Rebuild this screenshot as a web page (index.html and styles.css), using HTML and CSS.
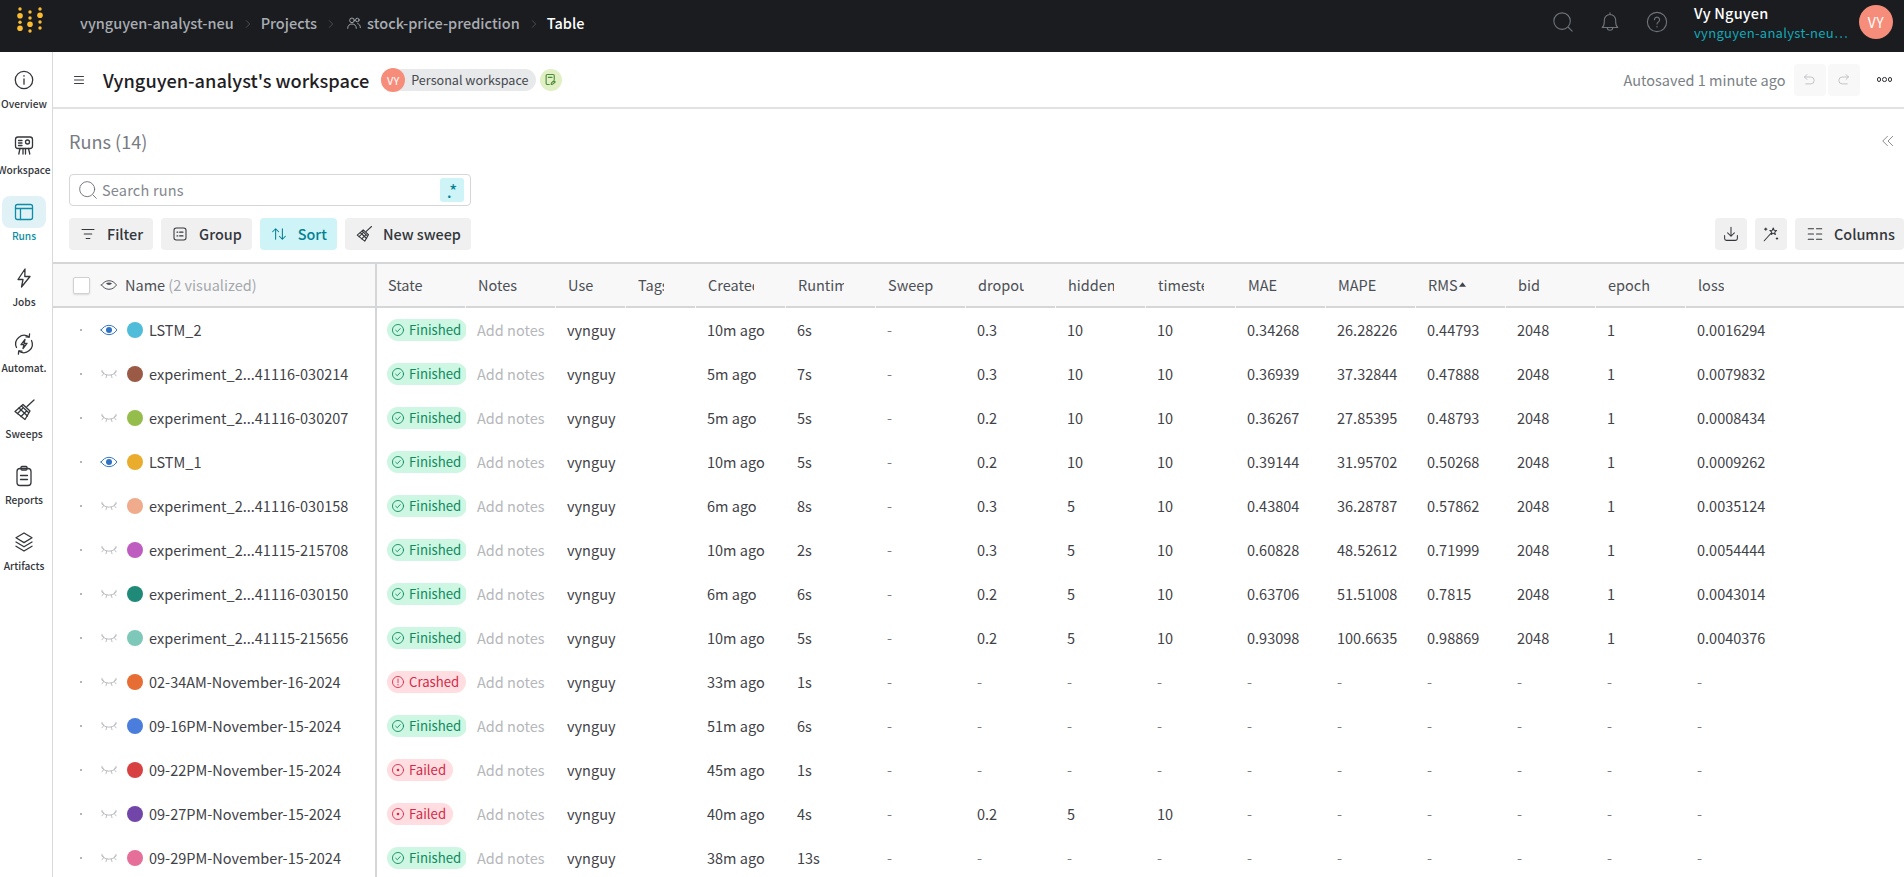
FILE: index.html
```html
<!DOCTYPE html>
<html lang="en">
<head>
<meta charset="utf-8">
<title>Table - stock-price-prediction</title>
<link rel="stylesheet" href="styles.css">
</head>
<body>
<svg class="defs" aria-hidden="true">
  <symbol id="i-info" viewBox="0 0 24 24"><circle cx="12" cy="12" r="8.7"/><path d="M12 11v5.2M12 7.600v.6"/></symbol>
  <symbol id="i-workspace" viewBox="0 0 24 24"><rect x="3.500" y="3" width="17" height="11.500" rx="2.500"/><path d="M6.500 6.500h3.500M6.500 9h3.500M6.500 11.500h3.500"/><circle cx="15.500" cy="8" r="2"/><path d="M8 14.500L6.800 20M11 14.500V20M13.500 14.500V20M16.500 14.500L17.800 20"/></symbol>
  <symbol id="i-runs" viewBox="0 0 24 24"><rect x="3.500" y="4.500" width="17" height="15" rx="2"/><path d="M3.500 8.500h17M8.500 8.500v11"/></symbol>
  <symbol id="i-jobs" viewBox="0 0 24 24"><path d="M13 3L6 13.500h5l-1.500 7.500L18 10.500h-5.200L13 3z"/></symbol>
  <symbol id="i-auto" viewBox="0 0 24 24"><path d="M4.500 15.500A8.500 8.500 0 0 1 17 4.900M19.500 8.500A8.500 8.500 0 0 1 7 19.100"/><path d="M17.600 1.900L17.200 5.200 14 4.900M6.400 22.100L6.800 18.800 10 19.100"/><path d="M13 7.500L9 12.700h3l-1 3.800 4-5.200h-3l1-3.800z"/></symbol>
  <symbol id="i-sweep" viewBox="0 0 24 24"><path d="M22 2l-7 6.500"/><path d="M11 6.500l7 6.500-5 8.500L3 13.500 11 6.500z"/><path d="M7 10l8.500 8M9.500 8l7 6.500M5.500 15.500l5-5M9 18.500l5-5"/></symbol>
  <symbol id="i-reports" viewBox="0 0 24 24"><rect x="5" y="4.500" width="14" height="17" rx="3"/><rect x="9" y="2.500" width="6" height="3.500" rx="1"/><path d="M8.500 11.500h7M8.500 15.500h7"/></symbol>
  <symbol id="i-layers" viewBox="0 0 24 24"><path d="M12 3l8 4.800-8 4.800-8-4.800L12 3z"/><path d="M4 12l8 4.800 8-4.800M4 16.200L12 21l8-4.800"/></symbol>
  <symbol id="i-search" viewBox="0 0 24 24"><circle cx="11" cy="11" r="9"/><path d="M18 18l4 4"/></symbol>
  <symbol id="i-bell" viewBox="0 0 24 24"><path d="M3.500 18c1.700-1.300 2.300-3.300 2.300-6.300V10a6.200 6.200 0 0 1 12.400 0v1.700c0 3 .6 5 2.300 6.300H3.500z"/><path d="M9 18a3 3 0 0 0 6 0"/><path d="M12 2v1.800"/></symbol>
  <symbol id="i-help" viewBox="0 0 24 24"><circle cx="12" cy="12" r="10.500"/><path d="M9.200 9.500a2.800 2.800 0 1 1 4.300 2.400c-1 .6-1.500 1.200-1.500 2.300M12 16.800v.6"/></symbol>
  <symbol id="i-users" viewBox="0 0 24 24"><circle cx="9" cy="8" r="3.500"/><path d="M2.500 20c0-4 2.500-6.500 6.500-6.500s6.500 2.500 6.500 6.500"/><circle cx="17" cy="7.500" r="2.700"/><path d="M17.500 13c2.500.3 4 2.500 4 6"/></symbol>
  <symbol id="i-chev" viewBox="0 0 24 24"><path d="M8 4l8 8-8 8"/></symbol>
  <symbol id="i-collapse" viewBox="0 0 24 24"><path d="M11 4l-8 8 8 8M20 4l-8 8 8 8"/></symbol>
  <symbol id="i-menu" viewBox="0 0 24 24"><path d="M3 5h18M3 12h18M3 19h18"/></symbol>
  <symbol id="i-note" viewBox="0 0 24 24"><path d="M10 20H7a2 2 0 0 1-2-2V6a2 2 0 0 1 2-2h9a2 2 0 0 1 2 2v6"/><path d="M8.500 8.500h6"/><path d="M13 20l.500-2.500 4-3.500 2 2-4 3.500-2.500.500z"/></symbol>
  <symbol id="i-undo" viewBox="0 0 24 24"><path d="M8 4L4 8l4 4"/><path d="M4 8h10a5.500 5.500 0 0 1 0 11H6"/></symbol>
  <symbol id="i-redo" viewBox="0 0 24 24"><path d="M16 4l4 4-4 4"/><path d="M20 8H10a5.500 5.500 0 0 0 0 11h8"/></symbol>
  <symbol id="i-filter" viewBox="0 0 24 24"><path d="M4 6h16M7 12h10M9.500 18h5"/></symbol>
  <symbol id="i-group" viewBox="0 0 24 24"><rect x="4" y="4" width="16" height="16" rx="3"/><path d="M8 9.500h1M11.500 9.500H16M8 14.500h1M11.500 14.500H16"/></symbol>
  <symbol id="i-sort" viewBox="0 0 24 24"><path d="M7.500 19V5M3.500 9l4-4 4 4M16.500 5v14M12.500 15l4 4 4-4"/></symbol>
  <symbol id="i-down" viewBox="0 0 24 24"><path d="M12 3v12M7.500 10.500L12 15l4.500-4.500"/><path d="M3.500 14v4a2.500 2.500 0 0 0 2.500 2.500h12a2.500 2.500 0 0 0 2.500-2.500v-4"/></symbol>
  <symbol id="i-wand" viewBox="0 0 24 24"><path d="M3 21l9-10"/><path d="M15 4l1.200 3 3.300.2-2.500 2.200.8 3.300-2.800-1.800-2.800 1.800.8-3.300-2.500-2.200 3.300-.2L15 4z"/><path d="M5 4v3M3.500 5.500h3M20 17v2M19 18h2"/></symbol>
  <symbol id="i-cols" viewBox="0 0 24 24"><path d="M3 5h7M14 5h7M3 12h7M14 12h7M3 19h7M14 19h7"/></symbol>
  <symbol id="i-eye" viewBox="0 0 24 24"><path d="M2 12c2.800-3.800 6-5.700 10-5.700s7.200 1.900 10 5.700c-2.800 3.800-6 5.700-10 5.700S4.800 15.800 2 12z"/><path class="fill" d="M8 9.500a4.500 4.500 0 0 0 8 0c-2.600-.9-5.400-.9-8 0z"/></symbol>
  <symbol id="i-eye-on" viewBox="0 0 24 24"><path d="M1.500 12C4.400 7.800 8 5.800 12 5.800s7.600 2 10.500 6.200c-2.900 4.200-6.500 6.200-10.500 6.200S4.400 16.200 1.500 12z"/><circle class="fill" cx="12" cy="12" r="4"/></symbol>
  <symbol id="i-eye-off" viewBox="0 0 24 24"><path d="M2 9c2.800 3 6 4.500 10 4.500S19.200 12 22 9"/><path d="M5 11.500L2.500 14.500M9 13.200L8 17M15 13.200l1 3.800M19 11.500l2.500 3M2.500 7l2 3.200M21.500 7l-2 3.200"/></symbol>
  <symbol id="i-ok" viewBox="0 0 24 24"><circle cx="12" cy="12" r="9.500"/><path d="M8 12.300l2.800 2.700 5-5.500"/></symbol>
  <symbol id="i-crash" viewBox="0 0 24 24"><circle cx="12" cy="12" r="9.500"/><path d="M12 6.800v6.400M12 16.200v1"/></symbol>
  <symbol id="i-fail" viewBox="0 0 24 24"><circle cx="12" cy="12" r="9.500"/><circle class="fill" cx="12" cy="12" r="2.300"/></symbol>
</svg>

<header class="topbar">
  <svg class="logo" viewBox="0 0 30 30" aria-label="Weights and Biases">
    <circle cx="2" cy="2" r="1.700"/><circle cx="2" cy="8.700" r="2.800"/><circle cx="2" cy="15.300" r="1.700"/><circle cx="2" cy="21.300" r="2.800"/>
    <circle cx="12" cy="5" r="1.700"/><circle cx="12" cy="11" r="1.700"/><circle cx="12" cy="17.300" r="2.800"/><circle cx="12" cy="24" r="1.700"/>
    <circle cx="22" cy="2" r="1.700"/><circle cx="22" cy="8.300" r="2.800"/><circle cx="22" cy="15" r="1.700"/><circle cx="22" cy="21" r="1.700"/>
  </svg>
  <nav class="crumbs">
    <span class="crumb">vynguyen-analyst-neu</span>
    <svg class="ic chev"><use href="#i-chev"/></svg>
    <span class="crumb">Projects</span>
    <svg class="ic chev"><use href="#i-chev"/></svg>
    <svg class="ic users"><use href="#i-users"/></svg>
    <span class="crumb">stock-price-prediction</span>
    <svg class="ic chev"><use href="#i-chev"/></svg>
    <span class="crumb current">Table</span>
  </nav>
  <div class="top-right">
    <svg class="ic top-ic"><use href="#i-search"/></svg>
    <svg class="ic top-ic"><use href="#i-bell"/></svg>
    <svg class="ic top-ic"><use href="#i-help"/></svg>
    <div class="user">
      <div class="user-name">Vy Nguyen</div>
      <div class="user-org">vynguyen-analyst-neu…</div>
    </div>
    <div class="avatar">VY</div>
  </div>
</header>

<div class="shell">
  <aside class="sidebar">
    <a class="nav"><span class="nav-ic"><svg class="ic"><use href="#i-info"/></svg></span><span class="nav-label">Overview</span></a>
    <a class="nav"><span class="nav-ic"><svg class="ic"><use href="#i-workspace"/></svg></span><span class="nav-label">Workspace</span></a>
    <a class="nav active"><span class="nav-ic"><svg class="ic"><use href="#i-runs"/></svg></span><span class="nav-label">Runs</span></a>
    <a class="nav"><span class="nav-ic"><svg class="ic"><use href="#i-jobs"/></svg></span><span class="nav-label">Jobs</span></a>
    <a class="nav"><span class="nav-ic"><svg class="ic"><use href="#i-auto"/></svg></span><span class="nav-label">Automat.</span></a>
    <a class="nav"><span class="nav-ic"><svg class="ic"><use href="#i-sweep"/></svg></span><span class="nav-label">Sweeps</span></a>
    <a class="nav"><span class="nav-ic"><svg class="ic"><use href="#i-reports"/></svg></span><span class="nav-label">Reports</span></a>
    <a class="nav"><span class="nav-ic"><svg class="ic"><use href="#i-layers"/></svg></span><span class="nav-label">Artifacts</span></a>
  </aside>

  <main class="main">
    <div class="pagehead">
      <svg class="ic menu"><use href="#i-menu"/></svg>
      <h1 class="title">Vynguyen-analyst's workspace</h1>
      <div class="owner"><span class="owner-av">VY</span><span class="owner-text">Personal workspace</span></div>
      <span class="chip"><svg class="ic"><use href="#i-note"/></svg></span>
      <div class="pagehead-right">
        <span class="saved">Autosaved 1 minute ago</span>
        <span class="hist first"><svg class="ic"><use href="#i-undo"/></svg></span>
        <span class="hist"><svg class="ic"><use href="#i-redo"/></svg></span>
        <span class="more"><i></i><i></i><i></i></span>
      </div>
    </div>

    <section class="panel">
      <div class="panel-title">
        <h2 class="runs-title">Runs (14)</h2>
        <svg class="ic collapse"><use href="#i-collapse"/></svg>
      </div>
      <div class="search">
        <svg class="ic search-ic"><use href="#i-search"/></svg>
        <span class="search-text">Search runs</span>
        <span class="regex">.*</span>
      </div>
      <div class="tools">
        <button class="btn"><svg class="ic"><use href="#i-filter"/></svg>Filter</button>
        <button class="btn"><svg class="ic"><use href="#i-group"/></svg>Group</button>
        <button class="btn on"><svg class="ic"><use href="#i-sort"/></svg>Sort</button>
        <button class="btn"><svg class="ic"><use href="#i-sweep"/></svg>New sweep</button>
        <span class="tools-gap"></span>
        <button class="btn square"><svg class="ic"><use href="#i-down"/></svg></button>
        <button class="btn square"><svg class="ic"><use href="#i-wand"/></svg></button>
        <button class="btn cols"><svg class="ic"><use href="#i-cols"/></svg>Columns</button>
      </div>
    </section>

    <div class="table">
      <div class="row head">
        <div class="hc hname"><span class="check"></span><svg class="ic eye-h"><use href="#i-eye"/></svg><span>Name <span class="muted">(2 visualized)</span></span></div>
        <div class="hc hstate"><span class="lbl">State</span></div>
        <div class="hc"><span class="lbl">Notes</span></div>
        <div class="hc"><span class="lbl">User</span></div>
        <div class="hc"><span class="lbl">Tags</span></div>
        <div class="hc"><span class="lbl">Created</span></div>
        <div class="hc"><span class="lbl">Runtime</span></div>
        <div class="hc"><span class="lbl">Sweep</span></div>
        <div class="hc"><span class="lbl">dropout</span></div>
        <div class="hc"><span class="lbl">hidden</span></div>
        <div class="hc"><span class="lbl">timestep</span></div>
        <div class="hc"><span class="lbl">MAE</span></div>
        <div class="hc"><span class="lbl">MAPE</span></div>
        <div class="hc"><span class="lbl">RMS</span><svg class="sortmark" viewBox="0 0 8 5"><path d="M4 0l4 5H0z"/></svg></div>
        <div class="hc"><span class="lbl">bid</span></div>
        <div class="hc"><span class="lbl">epoch</span></div>
        <div class="hc"><span class="lbl">loss</span></div>
      </div>

      <div class="row"><div class="c cname"><i class="tick"></i><svg class="ic eye on"><use href="#i-eye-on"/></svg><span class="dot d1"></span><span>LSTM_2</span></div><div class="c cstate"><span class="badge ok"><svg class="ic"><use href="#i-ok"/></svg>Finished</span></div><div class="c note">Add notes</div><div class="c">vynguy</div><div class="c"></div><div class="c">10m ago</div><div class="c">6s</div><div class="c dash">-</div><div class="c">0.3</div><div class="c">10</div><div class="c">10</div><div class="c">0.34268</div><div class="c">26.28226</div><div class="c">0.44793</div><div class="c">2048</div><div class="c">1</div><div class="c">0.0016294</div></div>
      <div class="row"><div class="c cname"><i class="tick"></i><svg class="ic eye off"><use href="#i-eye-off"/></svg><span class="dot d2"></span><span>experiment_2...41116-030214</span></div><div class="c cstate"><span class="badge ok"><svg class="ic"><use href="#i-ok"/></svg>Finished</span></div><div class="c note">Add notes</div><div class="c">vynguy</div><div class="c"></div><div class="c">5m ago</div><div class="c">7s</div><div class="c dash">-</div><div class="c">0.3</div><div class="c">10</div><div class="c">10</div><div class="c">0.36939</div><div class="c">37.32844</div><div class="c">0.47888</div><div class="c">2048</div><div class="c">1</div><div class="c">0.0079832</div></div>
      <div class="row"><div class="c cname"><i class="tick"></i><svg class="ic eye off"><use href="#i-eye-off"/></svg><span class="dot d3"></span><span>experiment_2...41116-030207</span></div><div class="c cstate"><span class="badge ok"><svg class="ic"><use href="#i-ok"/></svg>Finished</span></div><div class="c note">Add notes</div><div class="c">vynguy</div><div class="c"></div><div class="c">5m ago</div><div class="c">5s</div><div class="c dash">-</div><div class="c">0.2</div><div class="c">10</div><div class="c">10</div><div class="c">0.36267</div><div class="c">27.85395</div><div class="c">0.48793</div><div class="c">2048</div><div class="c">1</div><div class="c">0.0008434</div></div>
      <div class="row"><div class="c cname"><i class="tick"></i><svg class="ic eye on"><use href="#i-eye-on"/></svg><span class="dot d4"></span><span>LSTM_1</span></div><div class="c cstate"><span class="badge ok"><svg class="ic"><use href="#i-ok"/></svg>Finished</span></div><div class="c note">Add notes</div><div class="c">vynguy</div><div class="c"></div><div class="c">10m ago</div><div class="c">5s</div><div class="c dash">-</div><div class="c">0.2</div><div class="c">10</div><div class="c">10</div><div class="c">0.39144</div><div class="c">31.95702</div><div class="c">0.50268</div><div class="c">2048</div><div class="c">1</div><div class="c">0.0009262</div></div>
      <div class="row"><div class="c cname"><i class="tick"></i><svg class="ic eye off"><use href="#i-eye-off"/></svg><span class="dot d5"></span><span>experiment_2...41116-030158</span></div><div class="c cstate"><span class="badge ok"><svg class="ic"><use href="#i-ok"/></svg>Finished</span></div><div class="c note">Add notes</div><div class="c">vynguy</div><div class="c"></div><div class="c">6m ago</div><div class="c">8s</div><div class="c dash">-</div><div class="c">0.3</div><div class="c">5</div><div class="c">10</div><div class="c">0.43804</div><div class="c">36.28787</div><div class="c">0.57862</div><div class="c">2048</div><div class="c">1</div><div class="c">0.0035124</div></div>
      <div class="row"><div class="c cname"><i class="tick"></i><svg class="ic eye off"><use href="#i-eye-off"/></svg><span class="dot d6"></span><span>experiment_2...41115-215708</span></div><div class="c cstate"><span class="badge ok"><svg class="ic"><use href="#i-ok"/></svg>Finished</span></div><div class="c note">Add notes</div><div class="c">vynguy</div><div class="c"></div><div class="c">10m ago</div><div class="c">2s</div><div class="c dash">-</div><div class="c">0.3</div><div class="c">5</div><div class="c">10</div><div class="c">0.60828</div><div class="c">48.52612</div><div class="c">0.71999</div><div class="c">2048</div><div class="c">1</div><div class="c">0.0054444</div></div>
      <div class="row"><div class="c cname"><i class="tick"></i><svg class="ic eye off"><use href="#i-eye-off"/></svg><span class="dot d7"></span><span>experiment_2...41116-030150</span></div><div class="c cstate"><span class="badge ok"><svg class="ic"><use href="#i-ok"/></svg>Finished</span></div><div class="c note">Add notes</div><div class="c">vynguy</div><div class="c"></div><div class="c">6m ago</div><div class="c">6s</div><div class="c dash">-</div><div class="c">0.2</div><div class="c">5</div><div class="c">10</div><div class="c">0.63706</div><div class="c">51.51008</div><div class="c">0.7815</div><div class="c">2048</div><div class="c">1</div><div class="c">0.0043014</div></div>
      <div class="row"><div class="c cname"><i class="tick"></i><svg class="ic eye off"><use href="#i-eye-off"/></svg><span class="dot d8"></span><span>experiment_2...41115-215656</span></div><div class="c cstate"><span class="badge ok"><svg class="ic"><use href="#i-ok"/></svg>Finished</span></div><div class="c note">Add notes</div><div class="c">vynguy</div><div class="c"></div><div class="c">10m ago</div><div class="c">5s</div><div class="c dash">-</div><div class="c">0.2</div><div class="c">5</div><div class="c">10</div><div class="c">0.93098</div><div class="c">100.6635</div><div class="c">0.98869</div><div class="c">2048</div><div class="c">1</div><div class="c">0.0040376</div></div>
      <div class="row"><div class="c cname"><i class="tick"></i><svg class="ic eye off"><use href="#i-eye-off"/></svg><span class="dot d9"></span><span>02-34AM-November-16-2024</span></div><div class="c cstate"><span class="badge bad"><svg class="ic"><use href="#i-crash"/></svg>Crashed</span></div><div class="c note">Add notes</div><div class="c">vynguy</div><div class="c"></div><div class="c">33m ago</div><div class="c">1s</div><div class="c dash">-</div><div class="c dash">-</div><div class="c dash">-</div><div class="c dash">-</div><div class="c dash">-</div><div class="c dash">-</div><div class="c dash">-</div><div class="c dash">-</div><div class="c dash">-</div><div class="c dash">-</div></div>
      <div class="row"><div class="c cname"><i class="tick"></i><svg class="ic eye off"><use href="#i-eye-off"/></svg><span class="dot d10"></span><span>09-16PM-November-15-2024</span></div><div class="c cstate"><span class="badge ok"><svg class="ic"><use href="#i-ok"/></svg>Finished</span></div><div class="c note">Add notes</div><div class="c">vynguy</div><div class="c"></div><div class="c">51m ago</div><div class="c">6s</div><div class="c dash">-</div><div class="c dash">-</div><div class="c dash">-</div><div class="c dash">-</div><div class="c dash">-</div><div class="c dash">-</div><div class="c dash">-</div><div class="c dash">-</div><div class="c dash">-</div><div class="c dash">-</div></div>
      <div class="row"><div class="c cname"><i class="tick"></i><svg class="ic eye off"><use href="#i-eye-off"/></svg><span class="dot d11"></span><span>09-22PM-November-15-2024</span></div><div class="c cstate"><span class="badge bad"><svg class="ic"><use href="#i-fail"/></svg>Failed</span></div><div class="c note">Add notes</div><div class="c">vynguy</div><div class="c"></div><div class="c">45m ago</div><div class="c">1s</div><div class="c dash">-</div><div class="c dash">-</div><div class="c dash">-</div><div class="c dash">-</div><div class="c dash">-</div><div class="c dash">-</div><div class="c dash">-</div><div class="c dash">-</div><div class="c dash">-</div><div class="c dash">-</div></div>
      <div class="row"><div class="c cname"><i class="tick"></i><svg class="ic eye off"><use href="#i-eye-off"/></svg><span class="dot d12"></span><span>09-27PM-November-15-2024</span></div><div class="c cstate"><span class="badge bad"><svg class="ic"><use href="#i-fail"/></svg>Failed</span></div><div class="c note">Add notes</div><div class="c">vynguy</div><div class="c"></div><div class="c">40m ago</div><div class="c">4s</div><div class="c dash">-</div><div class="c">0.2</div><div class="c">5</div><div class="c">10</div><div class="c dash">-</div><div class="c dash">-</div><div class="c dash">-</div><div class="c dash">-</div><div class="c dash">-</div><div class="c dash">-</div></div>
      <div class="row"><div class="c cname"><i class="tick"></i><svg class="ic eye off"><use href="#i-eye-off"/></svg><span class="dot d13"></span><span>09-29PM-November-15-2024</span></div><div class="c cstate"><span class="badge ok"><svg class="ic"><use href="#i-ok"/></svg>Finished</span></div><div class="c note">Add notes</div><div class="c">vynguy</div><div class="c"></div><div class="c">38m ago</div><div class="c">13s</div><div class="c dash">-</div><div class="c dash">-</div><div class="c dash">-</div><div class="c dash">-</div><div class="c dash">-</div><div class="c dash">-</div><div class="c dash">-</div><div class="c dash">-</div><div class="c dash">-</div><div class="c dash">-</div></div>
    </div>
  </main>
</div>
</body>
</html>
```

FILE: styles.css
```css
* { box-sizing: border-box; }
html, body { height: 100%; }
body {
  margin: 0;
  overflow: hidden;
  display: flex;
  flex-direction: column;
  background: #fff;
  color: #3f4248;
  font-family: "Noto Sans CJK SC", "Noto Sans", sans-serif;
  font-size: 14.5px;
}
h1, h2 { margin: 0; font-weight: inherit; font-size: inherit; }
.defs { width: 0; height: 0; position: absolute; }
.ic {
  width: 20px;
  height: 20px;
  fill: none;
  stroke: currentColor;
  stroke-width: 1.4;
  stroke-linecap: round;
  stroke-linejoin: round;
  flex: none;
}
symbol .fill { fill: currentColor; stroke: none; }

/* top bar */
.topbar {
  height: 52px;
  flex: none;
  display: flex;
  align-items: center;
  background: #1a1c1f;
  color: #a9adb3;
}
.logo { width: 30px; height: 30px; margin: 7px 0 0 18px; fill: #fcbc32; overflow: visible; align-self: flex-start; }
.crumbs { display: flex; align-items: center; margin-left: 32px; line-height: 20px; margin-top: -6px; }
.crumb { font-weight: 500; }
.current { color: #fff; }
.chev { width: 10px; height: 10px; margin: 1px 8px 0 9px; color: #6a6e75; }
.users { width: 16px; height: 16px; margin-right: 5px; margin-left: 2px; }
.top-right { margin-left: auto; display: flex; align-items: center; margin-top: -8px; }
.top-ic { width: 22px; height: 22px; margin: 0 24px 0 1px; color: #6f747b; stroke-width: 1.2; }
.user { width: 165px; margin-left: 2px; line-height: 20px; margin-top: 2px; }
.user-name { color: #fff; font-weight: 500; letter-spacing: .2px; }
.user-org { color: #13a9ba; font-size: 13px; letter-spacing: .3px; white-space: nowrap; }
.avatar {
  width: 34px; height: 34px; border-radius: 50%;
  background: #f68d7b; color: #fff;
  display: flex; align-items: center; justify-content: center;
  font-size: 14px; letter-spacing: .5px;
  margin-right: 11px;
}

/* shell */
.shell { flex: 1; display: flex; min-height: 0; }
.sidebar { width: 53px; flex: none; border-right: 1px solid #d8d9db; padding-top: 11px; overflow: hidden; }
.nav { display: flex; flex-direction: column; align-items: center; height: 66px; width: 48px; }
.nav-ic { width: 44px; height: 32px; margin-top: 1px; flex: none; border-radius: 8px; display: flex; align-items: center; justify-content: center; color: #33363b; }
.nav-ic .ic { width: 24px; height: 24px; stroke-width: 1.3; }
.nav-label { font-size: 10.2px; line-height: 15px; font-weight: 500; white-space: nowrap; color: #33363b; }
.active .nav-ic { background: #e1f2f7; color: #0e8ea6; }
.active .nav-label { color: #0e8ea6; }

.main { flex: 1; min-width: 0; display: flex; flex-direction: column; }
.pagehead { height: 57px; flex: none; display: flex; align-items: center; border-bottom: 2px solid #e1e2e4; padding: 0 12px 0 20px; }
.menu { width: 12px; height: 12px; color: #3b3e44; stroke-width: 2; }
.title { font-size: 18.2px; line-height: 28px; font-weight: 500; color: #1e2024; margin-left: 18px; }
.owner { display: flex; align-items: center; height: 22px; margin-left: 12px; background: #e8e9ea; border-radius: 11px; padding-right: 7px; }
.owner-av { width: 24px; height: 24px; border-radius: 50%; background: #f68d7b; color: #fff; font-size: 11px; display: flex; align-items: center; justify-content: center; }
.owner-text { font-size: 12.6px; margin-left: 6px; color: #45484e; }
.chip { width: 22px; height: 22px; margin-left: 4px; border-radius: 50%; background: #e0f0c4; color: #4c8c3a; display: flex; align-items: center; justify-content: center; }
.chip .ic { width: 15px; height: 15px; stroke-width: 1.8; }
.pagehead-right { margin-left: auto; display: flex; align-items: center; }
.saved { color: #7b7f86; margin-right: 8px; }
.hist { width: 32px; height: 32px; border-radius: 4px; background: #f8f8f8; color: #babcc0; display: flex; align-items: center; justify-content: center; }
.hist.first { margin-right: 2px; }
.hist .ic { width: 15px; height: 15px; }
.more { display: flex; gap: 1px; margin-left: 17px; }
.more i { width: 4.500px; height: 4.500px; border: 1.200px solid #2f3136; border-radius: 50%; }

/* panel */
.panel { padding: 18px 0 12px 16px; }
.panel-title { display: flex; align-items: center; justify-content: space-between; height: 28px; padding-right: 9px; }
.runs-title { font-size: 18.1px; line-height: 28px; color: #777b82; }
.collapse { width: 14px; height: 14px; color: #6d7178; }
.search { width: 402px; height: 32px; margin-top: 19px; border: 1px solid #d5d6d8; border-radius: 4px; display: flex; align-items: center; padding: 0 6px 0 8px; }
.search-ic { width: 20px; height: 20px; color: #6c7076; stroke-width: 1.1; }
.search-text { color: #84888e; margin-left: 4px; line-height: 20px; letter-spacing: .2px; }
.regex { margin-left: auto; width: 24px; height: 24px; background: #cff4f7; border-radius: 3px; color: #038194; font-size: 18px; line-height: 24px; text-align: center; }
.tools { display: flex; gap: 8px; margin-top: 12px; }
.tools-gap { flex: 1; }
.btn {
  height: 32px; border: 0; border-radius: 4px; background: #f0f0f1; color: #33363b;
  font: 500 14.4px/20px "Noto Sans CJK SC", "Noto Sans", sans-serif;
  padding: 0 10px; display: flex; align-items: center; gap: 10px;
}
.btn .ic { width: 18px; height: 18px; }
.btn.on { background: #cff4f7; color: #038194; }
.square { width: 32px; justify-content: center; padding: 0; }
.cols { width: 109px; padding-left: 11px; gap: 10px; }

/* table */
.table { flex: 1; min-height: 0; overflow: hidden; }
.row {
  display: grid;
  grid-template-columns: 324px 89px 90px 70px 70px repeat(11, 90px) 1fr;
  height: 44px;
  align-items: stretch;
  line-height: 20px;
}
.head { height: 46px; background: #f8f8f8; border-top: 2px solid #d5d6d8; color: #4c4f55; }
.hc { display: flex; align-items: center; padding-left: 12px; border-bottom: 2px solid #d5d6d8; margin-right: 1px; white-space: nowrap; }
.hc:last-child { margin-right: 0; }
.hname { padding-left: 20px; margin-right: 0; border-right: 2px solid #d5d6d8; }
.hstate { padding-left: 11px; }
.check { width: 17px; height: 17px; background: #fff; border: 1px solid #d0d1d4; border-radius: 2px; box-shadow: 0 1px 2px rgba(0, 0, 0, .12); }
.eye-h { width: 18px; height: 18px; margin: 0 7px 0 10px; stroke-width: 1.3; }
.muted { color: #a5a8ad; }
.lbl { display: block; max-width: 46px; overflow: hidden; }
.hc:nth-child(4) .lbl, .hc:nth-child(5) .lbl { max-width: 26px; }
.sortmark { width: 7px; height: 5px; margin: -2px 0 0 1px; fill: #3f4248; }

.c { display: flex; align-items: center; padding-left: 11px; white-space: nowrap; overflow: hidden; }
.cname { padding-left: 27px; border-right: 2px solid #d5d6d8; overflow: visible; }
.cstate { padding-left: 10px; }
.tick { width: 2px; height: 2px; border-radius: 50%; background: #9a9da2; flex: none; }
.eye { width: 18px; height: 18px; margin: 0 9px 0 18px; }
.on.eye { color: #2f72c4; stroke-width: 1.3; }
.off.eye { color: #a8abaf; stroke-width: 1; }
.dot { width: 16px; height: 16px; border-radius: 50%; margin-right: 6px; flex: none; }
.d1 { background: #4fbcd9; }
.d2 { background: #9a5a45; }
.d3 { background: #95bd4c; }
.d4 { background: #e9ac2d; }
.d5 { background: #efab8c; }
.d6 { background: #bf5cc0; }
.d7 { background: #1f8a78; }
.d8 { background: #7dc8b8; }
.d9 { background: #e66d33; }
.d10 { background: #4a7ddc; }
.d11 { background: #d74141; }
.d12 { background: #7246a9; }
.d13 { background: #e56f98; }
.badge { display: flex; align-items: center; height: 22px; border-radius: 11px; padding: 0 6px 0 4px; font-size: 13.2px; }
.badge .ic { width: 14px; height: 14px; margin-right: 4px; stroke-width: 1.5; }
.ok { background: #cdf6e3; color: #0e8a5d; }
.bad { background: #ffdde0; color: #d12b4a; padding-right: 7px; }
.note { color: #b5b7bb; }
.dash { color: #7a7d83; }
```
